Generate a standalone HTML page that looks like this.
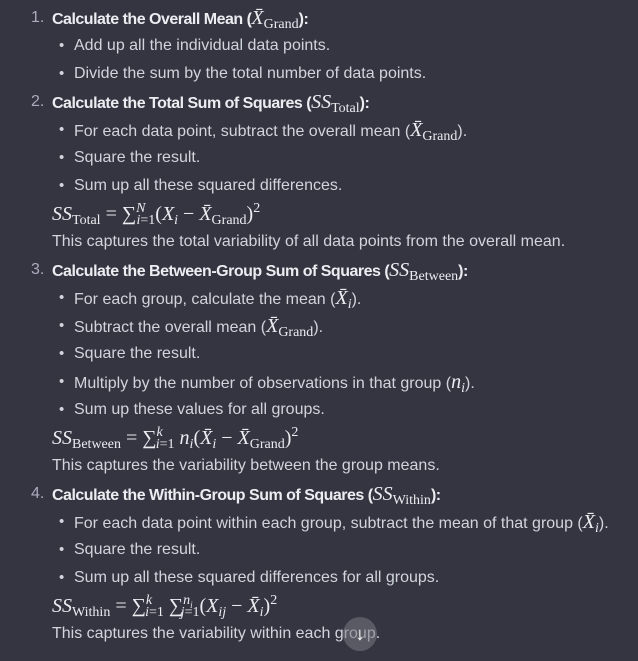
<!DOCTYPE html>
<html><head><style>
body{margin:0;width:638px;height:661px;background:#343541;overflow:hidden;font-family:"Liberation Sans",sans-serif;font-size:16px;color:#d1d5db;position:relative}
.l{position:absolute;left:0;height:28px;line-height:28px;white-space:nowrap}
.n{position:absolute;left:31px;color:#acacbe}
.h{position:absolute;left:52px;font-weight:bold;font-size:16px;color:#ececf1;letter-spacing:-0.5px}
.b{position:absolute;left:74px;letter-spacing:0}
.b:before{content:"•";position:absolute;left:-15px;font-size:15px}
.p{position:absolute;left:52px;letter-spacing:0}
.m{font-family:"Liberation Serif","DejaVu Serif",serif;font-weight:normal;font-size:20px;letter-spacing:0;color:#ececf1}
.i{font-style:italic}
sub{font-size:14px;vertical-align:-4px;line-height:0}
sup{font-size:14px;vertical-align:8px;line-height:0}
.btn{position:absolute;left:343px;top:617px;width:34px;height:34px;border-radius:50%;background:rgba(120,120,130,0.55);color:#fff;text-align:center;line-height:34px;font-size:18px}
</style></head><body>
<div class="l" style="top:4px"><span class="n">1.</span><span class="h">Calculate the Overall Mean (<span class="m"><span class="i">X̄</span><sub>Grand</sub></span>):</span></div>
<div class="l" style="top:32px"><span class="b">Add up all the individual data points.</span></div>
<div class="l" style="top:60px"><span class="b">Divide the sum by the total number of data points.</span></div>
<div class="l" style="top:88px"><span class="n">2.</span><span class="h">Calculate the Total Sum of Squares (<span class="m"><span class="i">SS</span><sub>Total</sub></span>):</span></div>
<div class="l" style="top:116px"><span class="b">For each data point, subtract the overall mean (<span class="m"><span class="i">X̄</span><sub>Grand</sub></span>).</span></div>
<div class="l" style="top:144px"><span class="b">Square the result.</span></div>
<div class="l" style="top:172px"><span class="b">Sum up all these squared differences.</span></div>
<div class="l" style="top:200px"><span class="p m"><span class="i">SS</span><sub>Total</sub> = ∑<sup class="i">N</sup><sub style="margin-left:-9px"><i>i</i>=1</sub>(<i>X<sub>i</sub></i> − <i>X̄</i><sub>Grand</sub>)<sup>2</sup></span></div>
<div class="l" style="top:228px"><span class="p">This captures the total variability of all data points from the overall mean.</span></div>
<div class="l" style="top:256px"><span class="n">3.</span><span class="h">Calculate the Between-Group Sum of Squares (<span class="m"><span class="i">SS</span><sub>Between</sub></span>):</span></div>
<div class="l" style="top:284px"><span class="b">For each group, calculate the mean (<span class="m"><i>X̄<sub>i</sub></i></span>).</span></div>
<div class="l" style="top:312px"><span class="b">Subtract the overall mean (<span class="m"><span class="i">X̄</span><sub>Grand</sub></span>).</span></div>
<div class="l" style="top:340px"><span class="b">Square the result.</span></div>
<div class="l" style="top:368px"><span class="b">Multiply by the number of observations in that group (<span class="m"><i>n<sub>i</sub></i></span>).</span></div>
<div class="l" style="top:396px"><span class="b">Sum up these values for all groups.</span></div>
<div class="l" style="top:424px"><span class="p m"><span class="i">SS</span><sub>Between</sub> = ∑<sup class="i">k</sup><sub style="margin-left:-7px"><i>i</i>=1</sub> <i>n<sub>i</sub></i>(<i>X̄<sub>i</sub></i> − <i>X̄</i><sub>Grand</sub>)<sup>2</sup></span></div>
<div class="l" style="top:452px"><span class="p">This captures the variability between the group means.</span></div>
<div class="l" style="top:480px"><span class="n">4.</span><span class="h">Calculate the Within-Group Sum of Squares (<span class="m"><span class="i">SS</span><sub>Within</sub></span>):</span></div>
<div class="l" style="top:508px"><span class="b">For each data point within each group, subtract the mean of that group (<span class="m"><i>X̄<sub>i</sub></i></span>).</span></div>
<div class="l" style="top:536px"><span class="b">Square the result.</span></div>
<div class="l" style="top:564px"><span class="b">Sum up all these squared differences for all groups.</span></div>
<div class="l" style="top:592px"><span class="p m"><span class="i">SS</span><sub>Within</sub> = ∑<sup class="i">k</sup><sub style="margin-left:-7px"><i>i</i>=1</sub> ∑<sup class="i">n<sub style="font-size:9px">i</sub></sup><sub style="margin-left:-12px"><i>j</i>=1</sub>(<i>X<sub>ij</sub></i> − <i>X̄<sub>i</sub></i>)<sup>2</sup></span></div>
<div class="l" style="top:620px"><span class="p">This captures the variability within each group.</span></div>
<div class="btn">↓</div>
</body></html>
